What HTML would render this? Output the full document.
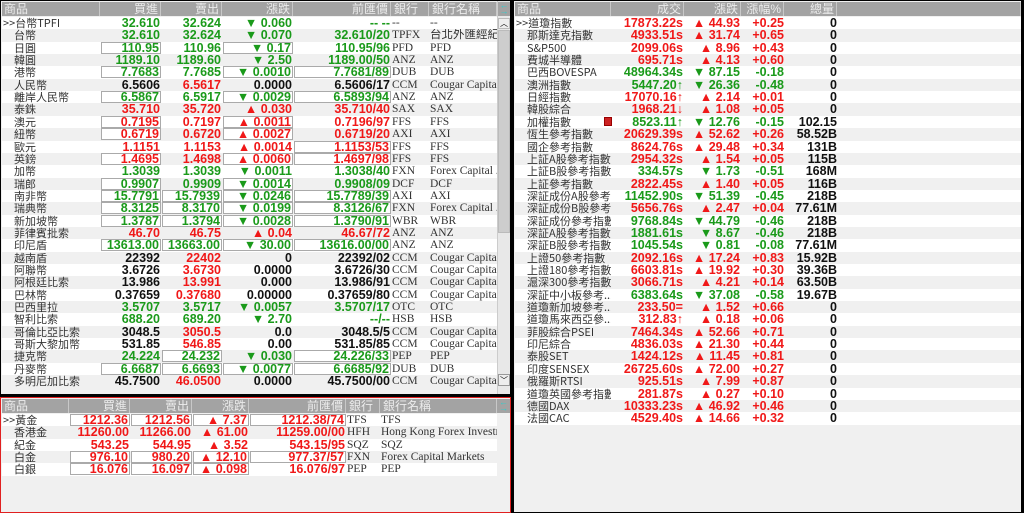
<!DOCTYPE html>
<html><head><meta charset="utf-8"><style>
*{margin:0;padding:0;box-sizing:border-box}
body{width:1024px;height:513px;background:#000;position:relative;overflow:hidden;font-family:"Liberation Sans","Noto Sans CJK TC",sans-serif}
.p{position:absolute;background:#f0f0f0;overflow:hidden}
.h{position:absolute;background:#a3a3a3;color:#ececec;font-size:12px;line-height:14px}
.h div{position:absolute;top:0;height:14px;border-right:1px solid #c8c8c8;padding:0 2px;white-space:nowrap}
.r{position:absolute;height:12.35px;font-size:11px;line-height:12px;white-space:nowrap}
.r div{position:absolute;top:0;height:12px;overflow:hidden}
.n{color:#333;font-family:"Noto Sans CJK TC",sans-serif;font-size:11px}
.v{font-weight:bold;text-align:right;font-size:12.5px;line-height:12px}
.b{background:#fff;border:1px solid #aaa;line-height:10px}
.g{color:#1a9a1a}.rd{color:#f01818}.k{color:#111}
.t{color:#333;font-family:"Liberation Serif","Noto Sans CJK TC",serif;font-size:11.5px}
</style></head><body>
<div class="p" id="A" style="left:1px;top:1px;width:509px;height:393px"></div>
<div class="p" id="B" style="left:0;top:397px;width:511px;height:116px;border:1px solid #e02020"></div>
<div class="p" id="C" style="left:514px;top:1px;width:507px;height:511px"></div>
<script>
function hdr(p,top,cols,w){var h=document.createElement('div');h.className='h';h.style.cssText='left:1px;top:'+top+'px;width:'+w+'px;height:14px';
cols.forEach(function(c){var d=document.createElement('div');d.style.left=c[0]+'px';d.style.width=(c[1]-c[0])+'px';d.style.textAlign=c[3]||'right';d.textContent=c[2];h.appendChild(d)});p.appendChild(h)}
function cell(r,cls,txt,left,right,box){var d=document.createElement('div');d.className=cls+(box?' b':'');d.style.left=left+'px';d.style.width=(right-left)+'px';if(cls.indexOf('v')>=0)d.style.paddingRight='1px';d.textContent=txt;r.appendChild(d)}
var A=document.getElementById('A'),B=document.getElementById('B'),C=document.getElementById('C');
hdr(A,1,[[0,98,'商品','left'],[99,159,'買進'],[160,220,'賣出'],[221,291,'漲跌'],[292,389,'前匯價'],[390,427,'銀行','left'],[428,495,'銀行名稱','left']],495);
var L=[
['>>台幣TPFI','32.610','32.624','▼ 0.060','-- --','--','--','g',''],
['台幣','32.610','32.624','▼ 0.070','32.610/20','TPFX','台北外匯經紀','g',''],
['日圓','110.95','110.96','▼ 0.17','110.95/96','PFD','PFD','g','1010'],
['韓圓','1189.10','1189.60','▼ 2.50','1189.00/50','ANZ','ANZ','g',''],
['港幣','7.7683','7.7685','▼ 0.0010','7.7681/89','DUB','DUB','g','1011'],
['人民幣','6.5606','6.5617','0.0000','6.5606/17','CCM','Cougar Capita...','k',''],
['離岸人民幣','6.5867','6.5917','▼ 0.0029','6.5893/94','ANZ','ANZ','g','1011'],
['泰銖','35.710','35.720','▲ 0.030','35.710/40','SAX','SAX','r',''],
['澳元','0.7195','0.7197','▲ 0.0011','0.7196/97','FFS','FFS','r','1010'],
['紐幣','0.6719','0.6720','▲ 0.0027','0.6719/20','AXI','AXI','r','1010'],
['歐元','1.1151','1.1153','▲ 0.0014','1.1153/53','FFS','FFS','r','0001'],
['英鎊','1.4695','1.4698','▲ 0.0060','1.4697/98','FFS','FFS','r','1011'],
['加幣','1.3039','1.3039','▼ 0.0011','1.3038/40','FXN','Forex Capital ...','g',''],
['瑞郎','0.9907','0.9909','▼ 0.0014','0.9908/09','DCF','DCF','g','1010'],
['南非幣','15.7791','15.7939','▼ 0.0246','15.7789/39','AXI','AXI','g','1111'],
['瑞典幣','8.3125','8.3170','▼ 0.0199','8.3126/67','FXN','Forex Capital ...','g','1111'],
['新加坡幣','1.3787','1.3794','▼ 0.0028','1.3790/91','WBR','WBR','g','1111'],
['菲律賓批索','46.70','46.75','▲ 0.04','46.67/72','ANZ','ANZ','r',''],
['印尼盾','13613.00','13663.00','▼ 30.00','13616.00/00','ANZ','ANZ','g','1111'],
['越南盾','22392','22402','0','22392/02','CCM','Cougar Capita...','k',''],
['阿聯幣','3.6726','3.6730','0.0000','3.6726/30','CCM','Cougar Capita...','k',''],
['阿根廷比索','13.986','13.991','0.000','13.986/91','CCM','Cougar Capita...','k',''],
['巴林幣','0.37659','0.37680','0.00000','0.37659/80','CCM','Cougar Capita...','k',''],
['巴西里拉','3.5707','3.5717','▼ 0.0057','3.5707/17','OTC','OTC','g',''],
['智利比索','688.20','689.20','▼ 2.70','--/--','HSB','HSB','g',''],
['哥倫比亞比索','3048.5','3050.5','0.0','3048.5/5','CCM','Cougar Capita...','k',''],
['哥斯大黎加幣','531.85','546.85','0.00','531.85/85','CCM','Cougar Capita...','k',''],
['捷克幣','24.224','24.232','▼ 0.030','24.226/33','PEP','PEP','g','0101'],
['丹麥幣','6.6687','6.6693','▼ 0.0077','6.6685/92','DUB','DUB','g','1111'],
['多明尼加比索','45.7500','46.0500','0.0000','45.7500/00','CCM','Cougar Capita...','k','']];
function cc(c){return c=='g'?'g':c=='r'?'rd':'k'}
function build(p,rows,top,w,X){rows.forEach(function(d,i){var r=document.createElement('div');r.className='r';r.style.cssText='left:1px;width:'+w+'px;top:'+(top+i*12.35)+'px;background:'+(i%2?'#f0f0f0':'#fff');
var c=cc(d[7]),bx=d[8]||'0000';var nm=d[0];
cell(r,'n',nm,nm.indexOf('>>')==0?1:12,X[0]);
cell(r,'v '+c,d[1],X[0]+1,X[1],bx[0]=='1');
cell(r,'v '+(c=='k'?'rd':c),d[2],X[1]+1,X[2],bx[1]=='1');
var ch=d[3];cell(r,'v '+(ch.indexOf('▼')>=0?'g':ch.indexOf('▲')>=0?'rd':'k'),ch,X[2]+1,X[3],bx[2]=='1');
cell(r,'v '+c,d[4],X[3]+1,X[4],bx[3]=='1');
cell(r,'t',d[5],X[4]+1,X[5]);cell(r,'t',d[6],X[5]+1,X[6]);p.appendChild(r)})}
build(A,L,16,495,[98,159,220,291,389,427,495]);
A.insertAdjacentHTML('beforeend','<div style="position:absolute;left:496px;top:0;width:13px;height:393px;background:#e8e8e8;border-left:1px solid #ccc"></div><div style="position:absolute;left:497px;top:1px;width:12px;height:14px;background:#a3a3a3;color:#3cc;font-size:9px;line-height:6px;text-align:center">←<br>→</div><div style="position:absolute;left:497px;top:17px;width:12px;height:11px;background:#eee;border:1px solid #bbb;font-size:8px;text-align:center;line-height:10px">︿</div><div style="position:absolute;left:497px;top:29px;width:12px;height:203px;background:#cdcdcd;border:1px solid #bbb"></div><div style="position:absolute;left:497px;top:373px;width:12px;height:12px;background:#eee;border:1px solid #999;font-size:8px;text-align:center;line-height:11px">﹀</div>');
hdr(B,1,[[0,67,'商品','left'],[68,128,'買進'],[129,190,'賣出'],[191,247,'漲跌'],[248,344,'前匯價'],[345,378,'銀行','left'],[379,495,'銀行名稱','left']],495);
B.insertAdjacentHTML('beforeend','<div style="position:absolute;left:496px;top:1px;width:13px;height:14px;background:#a3a3a3;color:#3cc;font-size:9px;line-height:6px;text-align:center">←<br>→</div>');
var G=[['>>黃金','1212.36','1212.56','▲ 7.37','1212.38/74','TFS','TFS','r','1111'],
['香港金','11260.00','11266.00','▲ 61.00','11259.00/00','HFH','Hong Kong Forex Investm...','r',''],
['紀金','543.25','544.95','▲ 3.52','543.15/95','SQZ','SQZ','r',''],
['白金','976.10','980.20','▲ 12.10','977.37/57','FXN','Forex Capital Markets','r','1111'],
['白銀','16.076','16.097','▲ 0.098','16.076/97','PEP','PEP','r','1110']];
build(B,G,16,495,[67,128,190,247,344,378,495]);
hdr(C,1,[[0,96,'商品','left'],[97,169,'成交'],[170,226,'漲跌'],[227,269,'漲幅%'],[270,322,'總量'],[323,506,'']],506);
var R=[['>>道瓊指數','17873.22s','▲ 44.93','+0.25','0'],['那斯達克指數','4933.51s','▲ 31.74','+0.65','0'],['S&P500','2099.06s','▲ 8.96','+0.43','0'],['費城半導體','695.71s','▲ 4.13','+0.60','0'],['巴西BOVESPA','48964.34s','▼ 87.15','-0.18','0'],['澳洲指數','5447.20↑','▼ 26.36','-0.48','0'],['日經指數','17070.16↑','▲ 2.14','+0.01','0'],['韓股綜合','1968.21↓','▲ 1.08','+0.05','0'],['加權指數','8523.11↑','▼ 12.76','-0.15','102.15'],['恆生參考指數','20629.39s','▲ 52.62','+0.26','58.52B'],['國企參考指數','8624.76s','▲ 29.48','+0.34','131B'],['上証A股參考指數','2954.32s','▲ 1.54','+0.05','115B'],['上証B股參考指數','334.57s','▼ 1.73','-0.51','168M'],['上証參考指數','2822.45s','▲ 1.40','+0.05','116B'],['深証成份A股參考...','11452.90s','▼ 51.39','-0.45','218B'],['深証成份B股參考...','5656.76s','▲ 2.47','+0.04','77.61M'],['深証成份參考指數','9768.84s','▼ 44.79','-0.46','218B'],['深証A股參考指數','1881.61s','▼ 8.67','-0.46','218B'],['深証B股參考指數','1045.54s','▼ 0.81','-0.08','77.61M'],['上證50參考指數','2092.16s','▲ 17.24','+0.83','15.92B'],['上證180參考指數','6603.81s','▲ 19.92','+0.30','39.36B'],['滬深300參考指數','3066.71s','▲ 4.21','+0.14','63.50B'],['深証中小板參考...','6383.64s','▼ 37.08','-0.58','19.67B'],['道瓊新加坡參考...','233.50=','▲ 1.52','+0.66','0'],['道瓊馬來西亞參...','312.83↑','▲ 0.18','+0.06','0'],['菲股綜合PSEI','7464.34s','▲ 52.66','+0.71','0'],['印尼綜合','4836.03s','▲ 21.30','+0.44','0'],['泰股SET','1424.12s','▲ 11.45','+0.81','0'],['印度SENSEX','26725.60s','▲ 72.00','+0.27','0'],['俄羅斯RTSI','925.51s','▲ 7.99','+0.87','0'],['道瓊英國參考指數','281.87s','▲ 0.27','+0.10','0'],['德國DAX','10333.23s','▲ 46.92','+0.46','0'],['法國CAC','4529.40s','▲ 14.66','+0.32','0']];
R.forEach(function(d,i){var r=document.createElement('div');r.className='r';r.style.cssText='left:1px;width:506px;top:'+(16+i*12.35)+'px;background:'+(i%2?'#f0f0f0':'#fff');
var c=d[2].indexOf('▼')>=0?'g':'rd';
cell(r,'n',d[0],d[0].indexOf('>>')==0?1:12,96);
if(d[0]=='加權指數')r.insertAdjacentHTML('beforeend','<div style="left:89px;top:1px;width:8px;height:9px;background:#c22;border:1px solid #900"></div>');
cell(r,'v '+c,d[1],97,169);cell(r,'v '+c,d[2],170,226);cell(r,'v '+c,d[3],227,270);cell(r,'v k',d[4],271,323);C.appendChild(r)});
</script>
</body></html>
